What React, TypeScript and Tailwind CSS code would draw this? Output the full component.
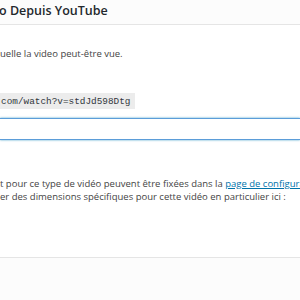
export default function App() {
  return (
    <div className="w-[300px] h-[300px] overflow-hidden bg-white flex flex-col font-['Open_Sans',sans-serif] text-[#444]">
      {/* modal header */}
      <div className="h-[25px] shrink-0 border-b border-[#e5e5e5] bg-[#fcfcfc]">
        <h1 className="text-[12.5px] leading-[22px] font-semibold text-[#23282d] whitespace-nowrap -ml-[1px]">
          o Depuis YouTube
        </h1>
      </div>

      {/* modal body */}
      <div className="flex-1 flex flex-col">
        <p className="mt-[22px] text-[9.5px] leading-[13.5px] whitespace-nowrap">
          uelle la video peut-être vue.
        </p>

        <code className="mt-[32px] block h-[16px] pt-[2px] pl-[1px] pr-[5px] self-start bg-[#ececec] font-['Liberation_Mono'] text-[9.4px] leading-[14px] text-[#32373c] whitespace-nowrap">
          com/watch?v=stdJd598Dtg
        </code>

        <div className="mt-[9px] h-[22px] border-y border-[#5b9dd9] shadow-[0_0_2px_rgba(30,140,190,0.8)] bg-white"></div>

        <p className="mt-[37px] text-[9.5px] leading-[13.5px] whitespace-nowrap">
          t pour ce type de vidéo peuvent être fixées dans la{' '}
          <a className="text-[#0073aa] underline">page de configuration</a>
          <br />
          er des dimensions spécifiques pour cette vidéo en particulier ici :
        </p>
      </div>

      {/* modal footer */}
      <div className="h-[43px] shrink-0 border-t border-[#e5e5e5] bg-[#fcfcfc]"></div>
    </div>
  );
}
